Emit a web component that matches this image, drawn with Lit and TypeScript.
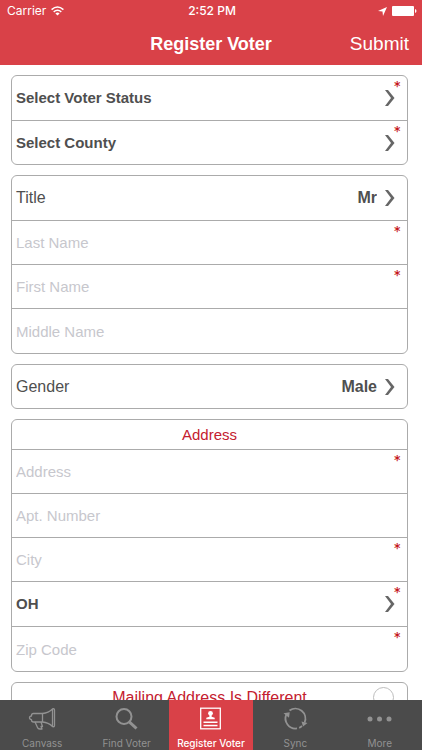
import { LitElement, html, svg, css, nothing } from "lit";
import { customElement } from "lit/decorators.js";
import { classMap } from "lit/directives/class-map.js";

type Field =
  | { kind: "select"; name: string; label?: string; options: string[]; required?: boolean }
  | { kind: "text"; name: string; required?: boolean };

interface Group {
  heading?: string;
  fields: Field[];
}

const groups: Group[] = [
  {
    fields: [
      { kind: "select", name: "Voter Status", options: ["Select Voter Status"], required: true },
      { kind: "select", name: "County", options: ["Select County"], required: true },
    ],
  },
  {
    fields: [
      { kind: "select", name: "Title", label: "Title", options: ["Mr"] },
      { kind: "text", name: "Last Name", required: true },
      { kind: "text", name: "First Name", required: true },
      { kind: "text", name: "Middle Name" },
    ],
  },
  { fields: [{ kind: "select", name: "Gender", label: "Gender", options: ["Male"] }] },
  {
    heading: "Address",
    fields: [
      { kind: "text", name: "Address", required: true },
      { kind: "text", name: "Apt. Number" },
      { kind: "text", name: "City", required: true },
      { kind: "select", name: "State", options: ["OH"], required: true },
      { kind: "text", name: "Zip Code", required: true },
    ],
  },
];

const icons = {
  canvass: svg`<g fill="none" stroke="currentColor" stroke-width="1.3" stroke-linejoin="round">
    <path d="M14.500 6.500H5.500Q3.500 6.500 3.500 8.500V9Q1.500 9 1.500 10.800T3.500 12.600V13Q3.500 15 5.500 15H14.500Z"/>
    <path d="M14.500 6.500Q20.500 6 24.500 2V19.500Q20.500 15.500 14.500 15"/>
    <path d="M24.500 2Q26.500 1.200 26.500 3V18.500Q26.500 20.300 24.500 19.500"/>
    <path d="M7 15L9.500 20.500Q10 22 12 22H14L13 19.500H14.500L13 15"/></g>`,
  find: svg`<g fill="none" stroke="currentColor"><circle cx="12" cy="9.500" r="7.500" stroke-width="2"/>
    <path d="M17.300 14.800L24.500 21.500" stroke-width="3"/></g>`,
  register: svg`<rect x="4.700" y="1.200" width="19.600" height="20.600" fill="none" stroke="currentColor" stroke-width="1.300"/>
    <g fill="currentColor"><circle cx="14.500" cy="6.300" r="2.400"/>
    <path d="M13.400 8h2.200v1.700l3.100 1v1.600h-8.400v-1.600l3.100-1z"/>
    <rect x="7.500" y="14.500" width="14" height="1.500"/><rect x="7.500" y="17.800" width="14" height="1.500"/></g>`,
  sync: svg`<g fill="none" stroke="currentColor" stroke-width="1.800">
    <path d="M16 21.400A10 10 0 0 1 5.500 7.200"/><path d="M8.500 3.500A10 10 0 0 1 23.600 15.500"/><path d="M18.200 20.800A10 10 0 0 0 21 19"/></g>
    <g fill="currentColor"><path d="M2.500 6.300L8.700 5.300L8 10.800Z"/><path d="M20.500 14.500L26.500 16L22 19.500Z"/></g>`,
  more: svg`<g fill="currentColor"><circle cx="5" cy="12" r="2.500"/><circle cx="14.500" cy="12" r="2.500"/><circle cx="24" cy="12" r="2.500"/></g>`,
};

@customElement("status-bar")
class StatusBar extends LitElement {
  static styles = css`
    :host { display: grid; grid-template-columns: 1fr auto 1fr; align-items: center; height: 22px; padding: 0 5px 0 7px;
      font: 12px/16px Inter, "Liberation Sans", sans-serif; }
    .left, .right { display: flex; align-items: center; gap: 5px; }
    .right { justify-content: flex-end; }
    .time { font-weight: 500; }
    svg { display: block; }
  `;
  render() {
    return html`
      <span class="left">Carrier
        <svg width="13" height="10" viewBox="0 0 13 10" aria-hidden="true">
          <g fill="none" stroke="currentColor" stroke-width="1.500"><path d="M.6 3.600Q6.500-1.600 12.400 3.600"/><path d="M2.700 5.900Q6.500 2.600 10.300 5.900"/></g>
          <path d="M4.400 7.400Q6.500 5.800 8.600 7.400L6.500 9.600Z" fill="currentColor"/>
        </svg></span>
      <span class="time">2:52 PM</span>
      <span class="right">
        <svg width="9" height="9" viewBox="0 0 9 9" aria-hidden="true"><path d="M9 0L5 9L4.500 4.500L0 4Z" fill="currentColor"/></svg>
        <svg width="25" height="10" viewBox="0 0 25 10" aria-hidden="true"><rect width="22" height="10" rx="1" fill="currentColor"/><path d="M23 3Q24.500 3.500 24.500 5T23 7Z" fill="currentColor"/></svg>
      </span>`;
  }
}

@customElement("tab-bar")
class TabBar extends LitElement {
  static properties = { active: {} };
  declare active: string;
  static styles = css`
    :host { display: block; background: #4b4b4b; }
    .tabs { display: grid; grid-template-columns: repeat(5, 1fr); height: 50px; }
    .tab { display: flex; flex-direction: column; align-items: center; justify-content: space-between; padding: 7px 0 0;
      box-sizing: border-box; color: #929292; text-decoration: none; white-space: nowrap;
      font: 10px/14px Inter, "Liberation Sans", sans-serif; }
    .active { background: #d94148; color: #fff; font-weight: 500; }
    svg { display: block; }
  `;
  render() {
    const tabs: [string, keyof typeof icons][] = [
      ["Canvass", "canvass"], ["Find Voter", "find"], ["Register Voter", "register"], ["Sync", "sync"], ["More", "more"],
    ];
    return html`<nav class="tabs">${tabs.map(([label, icon]) => html`
      <a href="#${icon}" class=${classMap({ tab: true, active: icon === this.active })}>
        <svg width="29" height="24" viewBox="0 0 29 24" aria-hidden="true">${icons[icon]}</svg>
        <span>${label}</span>
      </a>`)}</nav>`;
  }
}

@customElement("app-root")
class AppRoot extends LitElement {
  static styles = css`
    :host { display: flex; flex-direction: column; height: 100vh; background: #fff; color: #4f4f4f;
      font: 16px/20px "Liberation Sans", sans-serif; }
    .header { background: #d94148; color: #fff; flex: none; }
    .bar { display: grid; grid-template-columns: 1fr auto 1fr; align-items: center; height: 43px; padding: 0 13px; }
    .title { grid-column: 2; margin: 0; font-size: 18px; font-weight: 700; line-height: 24px; }
    .submit { justify-self: end; padding: 0; border: 0; background: none; color: inherit; font: 19px/24px "Liberation Sans", sans-serif; }
    .form { flex: 1; min-height: 0; overflow-y: auto; scrollbar-width: none; display: flex; flex-direction: column; gap: 10px;
      padding: 10px 14px 10px 11px; }
    .card { flex: none; border: 1px solid #ababab; border-radius: 6px; overflow: hidden; }
    .heading { margin: 0; height: 29px; border-bottom: 1px solid #ababab; color: #c4202f; text-align: center;
      font-size: 15px; line-height: 30px; font-weight: 400; }
    .row { position: relative; display: flex; align-items: center; box-sizing: border-box; height: 44px; padding-left: 4px;
      border-bottom: 1px solid #ababab; }
    .pick { height: 45px; padding-right: 12px; gap: 8px; }
    .row:last-child { border-bottom: 0; }
    .pick:last-child { height: 43px; }
    .caption { flex: none; }
    .value, .text { flex: 1; min-width: 0; height: 100%; margin: 0; padding: 0; border: 0; background: none; color: inherit;
      font: inherit; outline: none; }
    .text { font-size: 15px; }
    .value { appearance: none; font-size: 15px; font-weight: 700; }
    .end { text-align-last: right; font-size: 16px; }
    .text::placeholder { color: #c7c7cd; opacity: 1; }
    .chevron { flex: none; pointer-events: none; }
    .star { position: absolute; top: 3px; right: 6px; color: #c4151c; font: 15px/16px Inter, sans-serif; }
    .mailing { position: relative; display: flex; align-items: center; justify-content: center; height: 29px; color: #c4202f; }
    .check { appearance: none; position: absolute; right: 13px; top: 4px; width: 21px; height: 21px; margin: 0;
      border: 1px solid #bdbdbd; border-radius: 50%; }
    tab-bar { flex: none; }
  `;

  field(f: Field) {
    const star = f.required ? html`<span class="star" aria-hidden="true">*</span>` : nothing;
    const id = f.name.toLowerCase().replace(/\W+/g, "-");
    if (f.kind === "text") {
      return html`<div class="row"><input class="text" type="text" id=${id} aria-label=${f.name} placeholder=${f.name} ?required=${f.required}>${star}</div>`;
    }
    return html`<div class="row pick">
      ${f.label ? html`<label class="caption" for=${id}>${f.label}</label>` : nothing}
      <select id=${id} class=${classMap({ value: true, end: !!f.label })} aria-label=${f.name}>
        ${f.options.map((o) => html`<option>${o}</option>`)}
      </select>
      <svg class="chevron" width="10" height="16" viewBox="0 0 10 16" aria-hidden="true"><path d="M0 0H3L9.500 8L3 16H0L6 8Z" fill="#666"/></svg>
      ${star}
    </div>`;
  }

  render() {
    return html`
      <header class="header">
        <status-bar></status-bar>
        <div class="bar">
          <h1 class="title">Register Voter</h1>
          <button class="submit" type="submit" form="voter">Submit</button>
        </div>
      </header>
      <form class="form" id="voter">
        ${groups.map((g) => html`<section class="card">
          ${g.heading ? html`<h2 class="heading">${g.heading}</h2>` : nothing}
          ${g.fields.map((f) => this.field(f))}
        </section>`)}
        <section class="card">
          <label class="mailing">Mailing Address Is Different<input class="check" type="checkbox"></label>
        </section>
      </form>
      <tab-bar active="register"></tab-bar>`;
  }
}
